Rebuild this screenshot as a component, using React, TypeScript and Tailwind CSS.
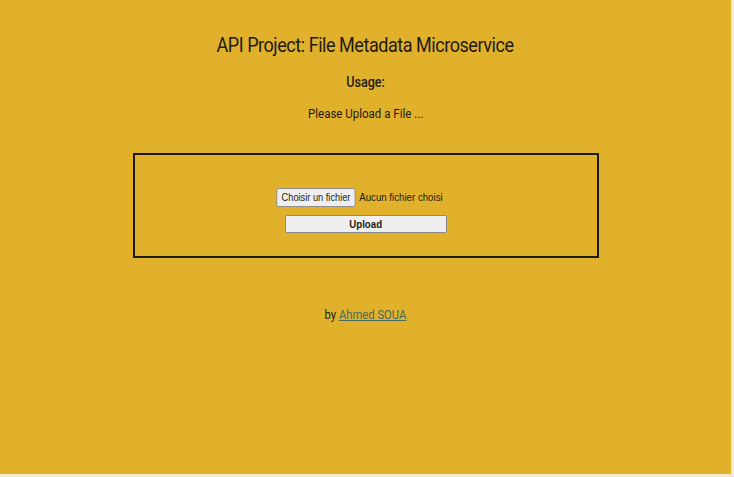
import React from "react";

export default function App() {
  return (
    <div className="w-[734px] h-[477px] bg-[#f3ead0] overflow-hidden">
      <div className="w-[731px] h-[474px] bg-[#e1b12c] flex flex-col items-center text-[#1f1a10] font-['Roboto',sans-serif]">
        <h1 className="mt-[33px] h-[24px] text-[20px] leading-[24px] tracking-[-0.5px] scale-x-[0.9] whitespace-nowrap">
          API Project: File Metadata Microservice
        </h1>
        <h3 className="mt-[16px] h-[18px] text-[14px] leading-[18px] font-medium scale-x-[0.9]">Usage:</h3>
        <p className="mt-[15px] h-[16px] text-[12.5px] leading-[16px] scale-x-[0.92] whitespace-nowrap">Please Upload a File ...</p>
        <div className="mt-[31px] w-[466px] h-[105px] border-2 border-[#1c1a14] flex flex-col items-center pt-[33px]">
          <div className="mr-[12px] flex items-center h-[19px] font-['Liberation_Sans',sans-serif] scale-x-[0.88]">
            <span className="h-[19px] px-[5px] flex items-center bg-[#efefef] border border-[#8a8a8a] rounded-[2px] text-[10.5px]">
              Choisir un fichier
            </span>
            <span className="ml-[4px] text-[11px]">Aucun fichier choisi</span>
          </div>
          <div className="mt-[8px] w-[162px] h-[18px] flex items-center justify-center bg-[#efefef] border border-[#8a8a8a] rounded-[2px] font-['Liberation_Sans',sans-serif] text-[11px] font-bold">
            <span className="scale-x-[0.88]">Upload</span>
          </div>
        </div>
        <p className="mt-[49px] text-[12.5px] leading-[16px] scale-x-[0.9] whitespace-nowrap">
          by <a className="underline text-[#466a5c]">Ahmed SOUA</a>
        </p>
      </div>
    </div>
  );
}
